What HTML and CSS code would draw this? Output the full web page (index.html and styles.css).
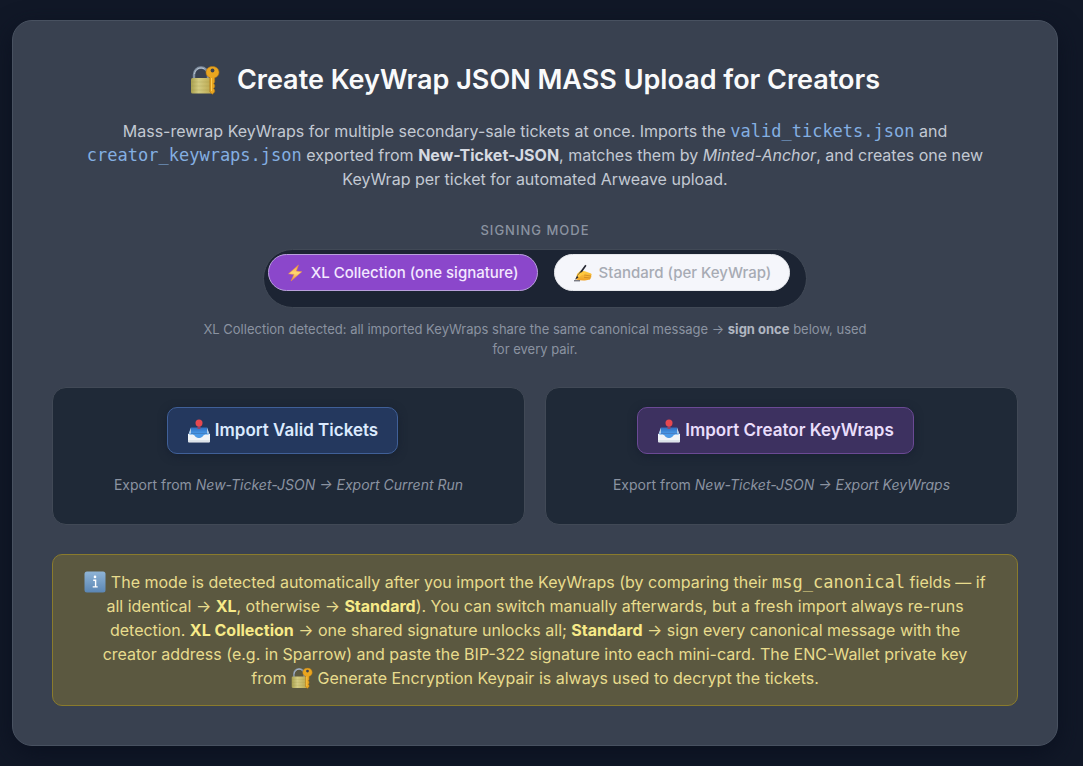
FILE: index.html
```
<!DOCTYPE html>
<html lang="en">
<head>
<meta charset="utf-8">
<meta name="viewport" content="width=device-width, initial-scale=1">
<title>Create KeyWrap JSON</title>
<link rel="stylesheet" href="styles.css">
</head>
<body>
<svg class="defs" aria-hidden="true">
  <defs>
    <linearGradient id="brass" x1="0" x2="1" y1="0" y2="0"><stop offset="0" stop-color="#a9a04f"/><stop offset=".35" stop-color="#d3cb82"/><stop offset="1" stop-color="#b9a448"/></linearGradient>
    <linearGradient id="tray" x1="0" x2="0" y1="0" y2="1"><stop offset="0" stop-color="#2f6fc0"/><stop offset="1" stop-color="#4b9ae8"/></linearGradient>
    <linearGradient id="info" x1="0" x2="0" y1="0" y2="1"><stop offset="0" stop-color="#8fb4d6"/><stop offset="1" stop-color="#5b86b4"/></linearGradient>
    <linearGradient id="bolt" x1="0" x2="0" y1="0" y2="1"><stop offset="0" stop-color="#f59a3c"/><stop offset=".5" stop-color="#ffd873"/><stop offset="1" stop-color="#f08a35"/></linearGradient>
    <linearGradient id="skin" x1="0" x2="0" y1="0" y2="1"><stop offset="0" stop-color="#ffcf45"/><stop offset="1" stop-color="#f0a126"/></linearGradient>
    <symbol id="lock" viewBox="0 0 30 30">
      <path d="M4 14V9.500a7 7 0 0 1 14 0V14" fill="none" stroke="#8290a2" stroke-width="2.400"/>
      <path d="M4.500 9a6.500 6.500 0 0 1 10-5" fill="none" stroke="#b6c2d0" stroke-width="1"/>
      <rect x="1" y="13" width="22" height="15.500" rx="1.500" fill="url(#brass)"/>
      <path d="M1.500 17h21M1.500 21h21M1.500 25h21" stroke="#8f873f" stroke-width=".6" opacity=".3"/>
      <path d="M22.500 1.500c-4 0-6.500 2.600-6.500 6 0 2.600 1.500 4.300 3.900 5.200V27l2.400 2.300 2.400-2.300v-2l-1.100-1.400L24.700 22v-2l-1-1.300 1-1.700v-4.200c2.600-.8 4.300-2.600 4.300-5.300 0-3.400-2.500-6-6.500-6z" fill="#e9a51f" stroke="#ad7218" stroke-width=".6"/>
      <circle cx="22.500" cy="5.500" r="1.900" fill="#3d4250"/>
      <path d="M21.500 13v13" stroke="#ffd15a" stroke-width=".9"/>
    </symbol>
    <symbol id="inbox" viewBox="0 0 24 24">
      <path d="M4 8.500h16l2 6H2z" fill="url(#tray)"/>
      <path d="M1.500 15 4 8.500V15zM22.500 15 20 8.500V15z" fill="#b8cfe5"/>
      <path d="M1 15h5c1.500 0 2.500 3.500 6 3.500s4.500-3.500 6-3.500h5v7.500a1 1 0 0 1-1 1H2a1 1 0 0 1-1-1z" fill="#f1f4f7"/>
      <path d="M2 14.500h20l-.5 1H18c-1.500 0-2.500 3.500-6 3.500S7.500 15.500 6 15.500H2.500z" fill="#4b9ae8"/>
      <path d="M1 22h22" stroke="#c0cbd6" stroke-width=".8"/>
      <path d="M12 5v5" stroke="#8e466e" stroke-width="3"/>
      <circle cx="12" cy="3.900" r="3.500" fill="#e6484f"/>
    </symbol>
    <symbol id="information" viewBox="0 0 22 22">
      <rect x=".5" y=".5" width="21" height="21" rx="2.500" fill="url(#info)"/>
      <circle cx="11" cy="5.900" r="1.300" fill="#fff"/>
      <path d="M9.200 9.300h2.400v6.200M8.700 15.900h5" fill="none" stroke="#fff" stroke-width="1.400"/>
    </symbol>
    <symbol id="lightning" viewBox="0 0 16 18">
      <path d="M11.500 1 1.500 9.800l5.500.7L4 17l10.800-9.300-5.500-.6z" fill="url(#bolt)" stroke="#ee9440" stroke-width=".5"/>
    </symbol>
    <symbol id="writing" viewBox="0 0 20 18">
      <path d="M3 15.500 4 10l3.500-3.500 4.500.7 5.500 2c1.400.7 1.500 2 .6 2.600.6.900.3 1.900-.6 2.100.1 1-.5 1.800-1.700 1.900-3 1.100-8.300 1.100-12.800-.3z" fill="url(#skin)"/>
      <path d="m11 11 7 1m-7 1.300 6.500.7" stroke="#bd7920" stroke-width=".6"/>
      <path d="m2 15.800 1.500-3 8.700-12 1.300 1-8.500 12z" fill="#242631"/>
      <path d="M5.800 12c1.500-2 3-3 4.800-2.500" fill="none" stroke="#ffc93f" stroke-width="2.600" stroke-linecap="round"/>
      <path d="M1 16.800h6" stroke="#343540" stroke-width=".9"/>
    </symbol>
  </defs>
</svg>
<main class="card">
  <h1 class="title"><svg class="title-icon" aria-hidden="true"><use href="#lock"/></svg>Create KeyWrap JSON MASS Upload for Creators</h1>
  <p class="intro">Mass-rewrap KeyWraps for multiple secondary-sale tickets at once. Imports the <code>valid_tickets.json</code> and <code>creator_keywraps.json</code> exported from <strong>New-Ticket-JSON</strong>, matches them by <em>Minted-Anchor</em>, and creates one new KeyWrap per ticket for automated Arweave upload.</p>
  <section class="mode" aria-labelledby="mode-label">
    <h2 class="mode-label" id="mode-label">SIGNING MODE</h2>
    <div class="switch">
      <button type="button" class="option option-active" aria-pressed="true"><svg class="bolt-icon" aria-hidden="true"><use href="#lightning"/></svg>XL Collection (one signature)</button>
      <button type="button" class="option" aria-pressed="false"><svg class="hand-icon" aria-hidden="true"><use href="#writing"/></svg>Standard (per KeyWrap)</button>
    </div>
    <p class="mode-hint">XL Collection detected: all imported KeyWraps share the same canonical message → <strong>sign once</strong> below, used for every pair.</p>
  </section>
  <div class="imports">
    <section class="panel">
      <button type="button" class="import import-blue"><svg class="tray-icon" aria-hidden="true"><use href="#inbox"/></svg>Import Valid Tickets</button>
      <p class="panel-hint">Export from <em>New-Ticket-JSON → Export Current Run</em></p>
    </section>
    <section class="panel">
      <button type="button" class="import import-purple"><svg class="tray-icon" aria-hidden="true"><use href="#inbox"/></svg>Import Creator KeyWraps</button>
      <p class="panel-hint">Export from <em>New-Ticket-JSON → Export KeyWraps</em></p>
    </section>
  </div>
  <p class="notice"><svg class="inline-icon" aria-hidden="true"><use href="#information"/></svg> The mode is detected automatically after you import the KeyWraps (by comparing their <code>msg_canonical</code> fields — if all identical → <strong>XL</strong>, otherwise → <strong>Standard</strong>). You can switch manually afterwards, but a fresh import always re-runs detection. <strong>XL Collection</strong> → one shared signature unlocks all; <strong>Standard</strong> → sign every canonical message with the creator address (e.g. in Sparrow) and paste the BIP-322 signature into each mini-card. The ENC-Wallet private key <span class="together">from <svg class="inline-icon" aria-hidden="true"><use href="#lock"/></svg></span> Generate Encryption Keypair is always used to decrypt the tickets.</p>
</main>
</body>
</html>
```
FILE: styles.css
```
* { box-sizing: border-box; }
body {
  margin: 0;
  padding: 20px 25px 20px 12px;
  background: #111827;
  color: #c3c9d3;
  font-family: Inter, "Liberation Sans", sans-serif;
  font-size: 16px;
  line-height: 24px;
  text-align: center;
}
button { font-family: inherit; cursor: pointer; }
h1, h2, p { margin: 0; }
code { font-family: "DejaVu Sans Mono", "Liberation Mono", monospace; font-size: 17px; line-height: 1; }
.defs { position: absolute; width: 0; height: 0; }
.card {
  padding: 41px 39px 39px;
  border: 1px solid #485160;
  border-radius: 20px;
  background: #394150;
  box-shadow: 0 8px 24px #0b1120;
}
.title {
  display: flex;
  align-items: center;
  justify-content: center;
  gap: 17px;
  color: #f9fafb;
  font-size: 27px;
  font-weight: 600;
  line-height: 36px;
}
.title-icon { width: 30px; height: 30px; }
.intro { margin-top: 21px; padding: 0 16px; }
.intro code { color: #84afe2; }
.intro strong { color: #d6dae2; font-weight: 700; }
.mode { display: flex; flex-direction: column; align-items: center; margin-top: 29px; }
.mode-label { color: #8b93a1; font-size: 13px; font-weight: 500; line-height: 20px; letter-spacing: 1px; }
.switch {
  display: flex;
  align-items: flex-start;
  gap: 16px;
  margin-top: 9px;
  padding: 4px 16px 16px 4px;
  border: 1px solid #414956;
  border-radius: 30px;
  background: #1c2433;
}
.option {
  display: flex;
  align-items: center;
  gap: 6px;
  height: 37px;
  padding: 0 18px;
  border: 1px solid #e5e7eb;
  border-radius: 20px;
  background: #f5f6fb;
  color: #a7abb4;
  font-size: 15px;
  font-weight: 500;
}
.option-active { gap: 8px; border-color: #b9a0dc; background: #8b47cb; color: #f3e8ff; }
.bolt-icon { width: 16px; height: 18px; }
.hand-icon { width: 20px; height: 18px; }
.mode-hint { max-width: 672px; margin-top: 11px; color: #8b93a1; font-size: 13px; line-height: 20px; }
.mode-hint strong { color: #b0b6c1; }
.imports { display: grid; grid-template-columns: 1fr 1fr; gap: 20px; margin-top: 28px; }
.panel {
  display: flex;
  flex-direction: column;
  align-items: center;
  padding: 19px 19px 27px;
  border: 1px solid #414956;
  border-radius: 14px;
  background: #1f2937;
}
.import {
  display: flex;
  align-items: center;
  gap: 4px;
  margin-right: 12px;
  padding: 10px 19px;
  border: 1px solid #406098;
  border-radius: 10px;
  background: #24385e;
  color: #dbeafe;
  font-size: 17px;
  font-weight: 600;
  line-height: 25px;
  box-shadow: 0 2px 8px #182131;
}
.import-purple { border-color: #6b4a95; background: #3d3160; color: #e9ddfb; }
.tray-icon { width: 24px; height: 24px; }
.panel-hint { margin-top: 19px; color: #8b93a1; font-size: 14px; }
.notice {
  margin-top: 29px;
  padding: 15px 29px;
  border: 1px solid #8a7b2c;
  border-radius: 10px;
  background: #5b5840;
  color: #e8dc8d;
}
.notice strong { color: #f7ea88; }
.inline-icon { width: 22px; height: 22px; vertical-align: -5px; }
.together { white-space: nowrap; }
```
